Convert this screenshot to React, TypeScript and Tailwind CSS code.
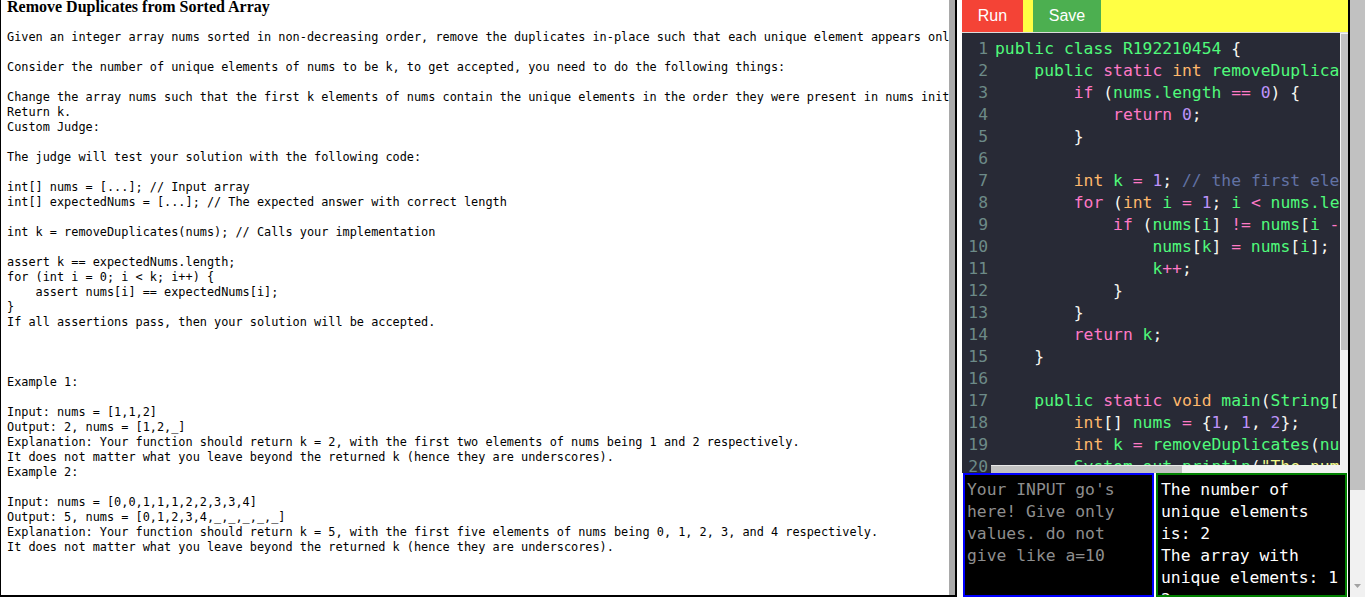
const problem = `Given an integer array nums sorted in non-decreasing order, remove the duplicates in-place such that each unique element appears only once. The relative order of the elements should be kept the same. Then return the number of unique elements in nums.

Consider the number of unique elements of nums to be k, to get accepted, you need to do the following things:

Change the array nums such that the first k elements of nums contain the unique elements in the order they were present in nums initially. The remaining elements of nums are not important as well as the size of nums.
Return k.
Custom Judge:

The judge will test your solution with the following code:

int[] nums = [...]; // Input array
int[] expectedNums = [...]; // The expected answer with correct length

int k = removeDuplicates(nums); // Calls your implementation

assert k == expectedNums.length;
for (int i = 0; i < k; i++) {
    assert nums[i] == expectedNums[i];
}
If all assertions pass, then your solution will be accepted.



Example 1:

Input: nums = [1,1,2]
Output: 2, nums = [1,2,_]
Explanation: Your function should return k = 2, with the first two elements of nums being 1 and 2 respectively.
It does not matter what you leave beyond the returned k (hence they are underscores).
Example 2:

Input: nums = [0,0,1,1,1,2,2,3,3,4]
Output: 5, nums = [0,1,2,3,4,_,_,_,_,_]
Explanation: Your function should return k = 5, with the first five elements of nums being 0, 1, 2, 3, and 4 respectively.
It does not matter what you leave beyond the returned k (hence they are underscores).`;

// dracula-ish token colours
const colors = {
  g: 'text-[#50fa7b]',
  p: 'text-[#ff79c6]',
  o: 'text-[#ffb86c]',
  v: 'text-[#bd93f9]',
  w: 'text-[#f8f8f2]',
  c: 'text-[#6272a4]',
  y: 'text-[#f1fa8c]',
};

type Tok = [keyof typeof colors, string];

const code: Tok[][] = [
  [['g', 'public class R192210454'], ['w', ' {']],
  [['w', '    '], ['g', 'public'], ['w', ' '], ['p', 'static'], ['w', ' '], ['o', 'int'], ['w', ' '], ['g', 'removeDuplicates'], ['w', '('], ['o', 'int'], ['w', '[] '], ['g', 'nums'], ['w', ') {']],
  [['w', '        '], ['p', 'if'], ['w', ' ('], ['g', 'nums.length'], ['w', ' '], ['p', '=='], ['w', ' '], ['v', '0'], ['w', ') {']],
  [['w', '            '], ['p', 'return'], ['w', ' '], ['v', '0'], ['w', ';']],
  [['w', '        }']],
  [],
  [['w', '        '], ['o', 'int'], ['w', ' '], ['g', 'k'], ['w', ' '], ['p', '='], ['w', ' '], ['v', '1'], ['w', '; '], ['c', '// the first element is always unique']],
  [['w', '        '], ['p', 'for'], ['w', ' ('], ['o', 'int'], ['w', ' '], ['g', 'i'], ['w', ' '], ['p', '='], ['w', ' '], ['v', '1'], ['w', '; '], ['g', 'i'], ['w', ' '], ['p', '<'], ['w', ' '], ['g', 'nums.length'], ['w', '; '], ['g', 'i'], ['p', '++'], ['w', ') {']],
  [['w', '            '], ['p', 'if'], ['w', ' ('], ['g', 'nums'], ['w', '['], ['g', 'i'], ['w', '] '], ['p', '!='], ['w', ' '], ['g', 'nums'], ['w', '['], ['g', 'i'], ['w', ' '], ['p', '-'], ['w', ' '], ['v', '1'], ['w', ']) {']],
  [['w', '                '], ['g', 'nums'], ['w', '['], ['g', 'k'], ['w', '] '], ['p', '='], ['w', ' '], ['g', 'nums'], ['w', '['], ['g', 'i'], ['w', '];']],
  [['w', '                '], ['g', 'k'], ['p', '++'], ['w', ';']],
  [['w', '            }']],
  [['w', '        }']],
  [['w', '        '], ['p', 'return'], ['w', ' '], ['g', 'k'], ['w', ';']],
  [['w', '    }']],
  [],
  [['w', '    '], ['g', 'public'], ['w', ' '], ['p', 'static'], ['w', ' '], ['o', 'void'], ['w', ' '], ['g', 'main'], ['w', '('], ['g', 'String'], ['w', '[] '], ['g', 'args'], ['w', ') {']],
  [['w', '        '], ['o', 'int'], ['w', '[] '], ['g', 'nums'], ['w', ' '], ['p', '='], ['w', ' {'], ['v', '1'], ['w', ', '], ['v', '1'], ['w', ', '], ['v', '2'], ['w', '};']],
  [['w', '        '], ['o', 'int'], ['w', ' '], ['g', 'k'], ['w', ' '], ['p', '='], ['w', ' '], ['g', 'removeDuplicates'], ['w', '('], ['g', 'nums'], ['w', ');']],
  [['w', '        '], ['g', 'System.out.println'], ['w', '('], ['y', '"The number of unique elements is: "'], ['w', ' '], ['p', '+'], ['w', ' '], ['g', 'k'], ['w', ');']],
];

const mono = "font-['DejaVu_Sans_Mono',monospace]";

function ProblemPanel() {
  return (
    <div className="w-[949px] shrink-0 overflow-hidden border-l border-b-2 border-black pl-[6px] text-black">
      <div className="h-[14px] whitespace-nowrap font-['Liberation_Serif',serif] text-[16px] font-bold leading-[14px]">
        Remove Duplicates from Sorted Array
      </div>
      <pre className={`${mono} pt-[16px] text-[11.86px] leading-[15px] whitespace-pre`}>{problem}</pre>
    </div>
  );
}

function Editor() {
  return (
    <div className={`flex h-[440px] bg-[#282a36] ${mono} text-[16.35px] leading-[22px]`}>
      <div className="w-[29px] shrink-0 overflow-hidden pt-[5px] pr-[3px] text-right text-[#6d8a88]">
        {code.map((_, i) => (
          <div key={i} className="h-[22px]">{i + 1}</div>
        ))}
      </div>
      <div className="flex min-w-0 flex-1 flex-col">
        <div className="h-[432px] overflow-hidden pt-[5px] pl-[4px] whitespace-pre">
          {code.map((line, i) => (
            <div key={i} className="h-[22px]">
              {line.map(([c, t], j) => (
                <span key={j} className={colors[c]}>{t}</span>
              ))}
            </div>
          ))}
        </div>
        {/* horizontal scrollbar */}
        <div className="flex h-[8px] bg-[#f1f1f1]">
          <div className="w-[191px] border-t border-[#e8e8e8] bg-[#c1c1c1]" />
        </div>
      </div>
      {/* vertical scrollbar */}
      <div className="w-[8px] shrink-0 border-l border-t border-[#f4f4f4] bg-[#f1f1f1]">
        <div className="h-[316px] bg-[#c1c1c1]" />
      </div>
    </div>
  );
}

function RightPanel() {
  return (
    <div className="flex w-[386px] shrink-0 flex-col">
      <div className="flex h-[32px] gap-[10px] bg-[#ffff44] font-['Liberation_Sans',Arial,sans-serif] text-[16px] text-white">
        <button className="w-[61px] bg-[#f44336]">Run</button>
        <button className="w-[68px] bg-[#4caf50]">Save</button>
      </div>
      <div className="h-[1px] bg-[#dcdcdc]" />
      <Editor />
      <div className={`flex min-h-0 flex-1 gap-[2px] pl-[1px] ${mono} text-[16.35px] leading-[22px]`}>
        <textarea
          className="w-[191px] resize-none overflow-hidden border-2 border-[#0000ff] bg-black px-[2px] pt-[4px] text-white outline-none placeholder:text-[#8e8e8e]"
          placeholder="Your INPUT go's here! Give only values. do not give like a=10"
        />
        <div className="w-[191px] overflow-hidden border-2 border-[#008000] bg-black px-[3px] pt-[4px] whitespace-pre-wrap text-white">
          {'The number of unique elements is: 2\nThe array with unique elements: 1 2'}
        </div>
      </div>
    </div>
  );
}

export default function App() {
  return (
    <div className="flex h-[597px] w-[1365px] overflow-hidden bg-white">
      <ProblemPanel />
      <div className="w-[6px] shrink-0 border-b-2 border-black bg-[#a9a9a9]" />
      <div className="w-[2px] shrink-0 bg-black" />
      <div className="w-[5px] shrink-0" />
      <RightPanel />
      <div className="w-[2px] shrink-0 bg-black" />
      {/* page scrollbar */}
      <div className="flex w-[15px] shrink-0 flex-col">
        <div className="h-[490px] bg-[#c1c1c1]" />
        <div className="flex flex-1 flex-col items-center justify-end bg-[#f1f1f1] pb-[9px]">
          <svg width="7" height="4" viewBox="0 0 7 4">
            <path d="M0 0h7L3.5 4z" fill="#a3a3a3" />
          </svg>
        </div>
      </div>
    </div>
  );
}
